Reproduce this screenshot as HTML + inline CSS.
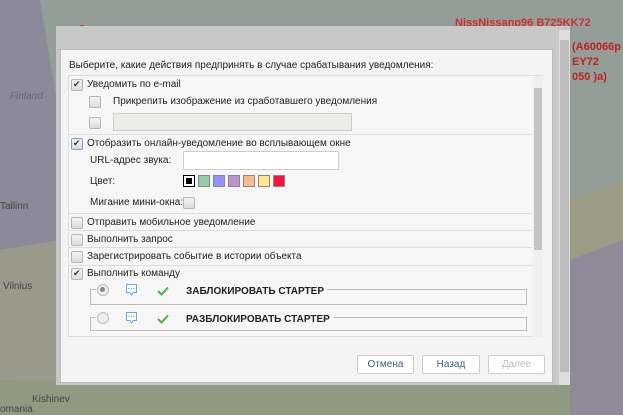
<!DOCTYPE html>
<html><head><meta charset="utf-8"><style>
body{margin:0;width:623px;height:415px;overflow:hidden;position:relative;font-family:"Liberation Sans",sans-serif;font-size:10px;color:#222;background:#95a19a}
.a{position:absolute}
.cb{position:absolute;width:10px;height:10px;border:1px solid #b5b5b5;border-radius:2px;background:linear-gradient(#f4f4f4,#dcdcdc)}
.cb.c::after{content:"✔";position:absolute;left:1px;top:-1px;font-size:9px;color:#333}
.t{position:absolute;white-space:nowrap;margin-top:1px}
.sep{position:absolute;left:69px;width:463px;height:1px;background:#dcdcdc}
.btn{position:absolute;top:355px;height:17px;border:1px solid #ccc;background:#fff;border-radius:2px;text-align:center;line-height:18px;font-size:10px;color:#3a5d8a}
.sw{position:absolute;top:175px;width:10px;height:10px;border:1px solid #888}
.b{font-weight:bold;font-size:10px;background:#f6f6f6;padding-right:3px}
</style></head><body>
<svg class="a" style="left:0;top:0" width="623" height="415">
<rect width="623" height="415" fill="#929e97"/>
<path d="M0 0 L40 0 L60 120 L55 260 L0 280Z" fill="#8c8a9a"/>
<path d="M0 250 L60 240 L60 415 L0 415Z" fill="#9a9a8a"/>
<path d="M0 380 L623 385 L623 415 L0 415Z" fill="#8f9a80"/>
<path d="M570 220 L623 215 L623 415 L570 415Z" fill="#8e8a98"/>
<path d="M570 200 L623 180 L623 240 L570 260Z" fill="#9a9c86"/>
<circle cx="82" cy="30" r="5" fill="#c02020"/>
</svg>
<div class="t" style="left:455px;top:16px;color:#d03030;font-size:11px;font-weight:bold">NissNissanp96 B725KK72</div>
<div class="t" style="left:572px;top:40px;color:#c02020;font-size:11px;font-weight:bold">(A60066p</div>
<div class="t" style="left:572px;top:55px;color:#c02020;font-size:11px;font-weight:bold">EY72</div>
<div class="t" style="left:572px;top:70px;color:#c02020;font-size:11px;font-weight:bold">050 )a)</div>
<div class="t" style="left:10px;top:90px;color:#666;font-style:italic">Finland</div>
<div class="t" style="left:0;top:200px;color:#444">Tallinn</div>
<div class="t" style="left:3px;top:280px;color:#444">Vilnius</div>
<div class="t" style="left:32px;top:393px;color:#444">Kishinev</div>
<div class="t" style="left:0;top:403px;color:#444">omania</div>
<div class="a" style="left:56px;top:26px;width:514px;height:359px;background:#c8c8c8"></div>
<div class="a" style="left:559px;top:30px;width:11px;height:355px;background:#ddd"></div>
<div class="a" style="left:560px;top:40px;width:9px;height:332px;background:#bdbdbd"></div>
<div class="a" style="left:60px;top:49px;width:493px;height:334px;background:#f4f4f4;border:1px solid #bbb;box-sizing:border-box"></div>
<div class="t" style="left:69px;top:59px">Выберите, какие действия предпринять в случае срабатывания уведомления:</div>
<div class="a" style="left:68px;top:75px;width:475px;height:262px;border:1px solid #ddd;box-sizing:border-box;background:#f6f6f6"></div>
<div class="a" style="left:533px;top:76px;width:10px;height:261px;background:#efefef"></div>
<div class="a" style="left:534px;top:88px;width:8px;height:162px;background:#c4c4c4"></div>
<div class="cb c" style="left:71px;top:79px"></div><div class="t" style="left:87px;top:78px">Уведомить по e-mail</div>
<div class="cb" style="left:89px;top:96px"></div><div class="t" style="left:113px;top:95px">Прикрепить изображение из сработавшего уведомления</div>
<div class="cb" style="left:89px;top:117px"></div>
<div class="a" style="left:113px;top:113px;width:239px;height:18px;background:#ececE6;border:1px solid #ccc;box-sizing:border-box"></div>
<div class="sep" style="top:134px"></div>
<div class="cb c" style="left:71px;top:138px;border-color:#7aa0d8"></div><div class="t" style="left:87px;top:137px">Отобразить онлайн-уведомление во всплывающем окне</div>
<div class="t" style="left:90px;top:154px">URL-адрес звука:</div>
<div class="a" style="left:183px;top:151px;width:156px;height:19px;background:#fff;border:1px solid #ccc;box-sizing:border-box"></div>
<div class="t" style="left:90px;top:175px">Цвет:</div>
<div class="sw" style="left:183px;background:#000;box-shadow:inset 0 0 0 2px #fff;border-color:#000"></div>
<div class="sw" style="left:198px;background:#90d0a8"></div>
<div class="sw" style="left:213px;background:#9090ff"></div>
<div class="sw" style="left:228px;background:#c090d0"></div>
<div class="sw" style="left:243px;background:#ffb890"></div>
<div class="sw" style="left:258px;background:#ffe890"></div>
<div class="sw" style="left:273px;background:#ff1040"></div>
<div class="t" style="left:90px;top:196px">Мигание мини-окна:</div>
<div class="cb" style="left:183px;top:197px"></div>
<div class="sep" style="top:213px"></div>
<div class="cb" style="left:71px;top:217px"></div><div class="t" style="left:87px;top:216px">Отправить мобильное уведомление</div>
<div class="sep" style="top:230px"></div>
<div class="cb" style="left:71px;top:234px"></div><div class="t" style="left:87px;top:233px">Выполнить запрос</div>
<div class="sep" style="top:247px"></div>
<div class="cb" style="left:71px;top:251px"></div><div class="t" style="left:87px;top:250px">Зарегистрировать событие в истории объекта</div>
<div class="sep" style="top:265px"></div>
<div class="cb c" style="left:71px;top:268px"></div><div class="t" style="left:87px;top:267px">Выполнить команду</div>
<div class="a" style="left:90px;top:289px;width:437px;height:16px;border:1px solid #bbb;box-sizing:border-box"></div>
<div class="a" style="left:96px;top:280px;width:90px;height:12px;background:#f6f6f6"></div>
<div class="a" style="left:97px;top:284px;width:10px;height:10px;border:1px solid #bbb;border-radius:50%;background:#eee"></div>
<div class="a" style="left:100px;top:287px;width:5px;height:5px;border-radius:50%;background:#888"></div>
<svg class="a" style="left:125px;top:283px" width="13" height="14"><path d="M1.5 1.5h10v8h-3.5l-1.5 2.5-1.5-2.5h-3.5z" fill="#fff" stroke="#6aa6e8"/><circle cx="4" cy="5.5" r=".7" fill="#6aa6e8"/><circle cx="6.5" cy="5.5" r=".7" fill="#6aa6e8"/><circle cx="9" cy="5.5" r=".7" fill="#6aa6e8"/></svg>
<svg class="a" style="left:157px;top:286px" width="12" height="10"><path d="M1 5l3.5 3.5L11 1.5" fill="none" stroke="#4caf50" stroke-width="2"/></svg>
<div class="t b" style="left:186px;top:285px">ЗАБЛОКИРОВАТЬ СТАРТЕР</div>
<div class="a" style="left:90px;top:317px;width:437px;height:14px;border:1px solid #bbb;box-sizing:border-box"></div>
<div class="a" style="left:96px;top:308px;width:90px;height:12px;background:#f6f6f6"></div>
<div class="a" style="left:97px;top:312px;width:10px;height:10px;border:1px solid #bbb;border-radius:50%;background:#eee"></div>
<svg class="a" style="left:125px;top:311px" width="13" height="14"><path d="M1.5 1.5h10v8h-3.5l-1.5 2.5-1.5-2.5h-3.5z" fill="#fff" stroke="#6aa6e8"/><circle cx="4" cy="5.5" r=".7" fill="#6aa6e8"/><circle cx="6.5" cy="5.5" r=".7" fill="#6aa6e8"/><circle cx="9" cy="5.5" r=".7" fill="#6aa6e8"/></svg>
<svg class="a" style="left:157px;top:314px" width="12" height="10"><path d="M1 5l3.5 3.5L11 1.5" fill="none" stroke="#4caf50" stroke-width="2"/></svg>
<div class="t b" style="left:186px;top:313px">РАЗБЛОКИРОВАТЬ СТАРТЕР</div>
<div class="btn" style="left:357px;width:55px">Отмена</div>
<div class="btn" style="left:422px;width:56px">Назад</div>
<div class="btn" style="left:488px;width:55px;color:#bbb">Далее</div>
</body></html>
